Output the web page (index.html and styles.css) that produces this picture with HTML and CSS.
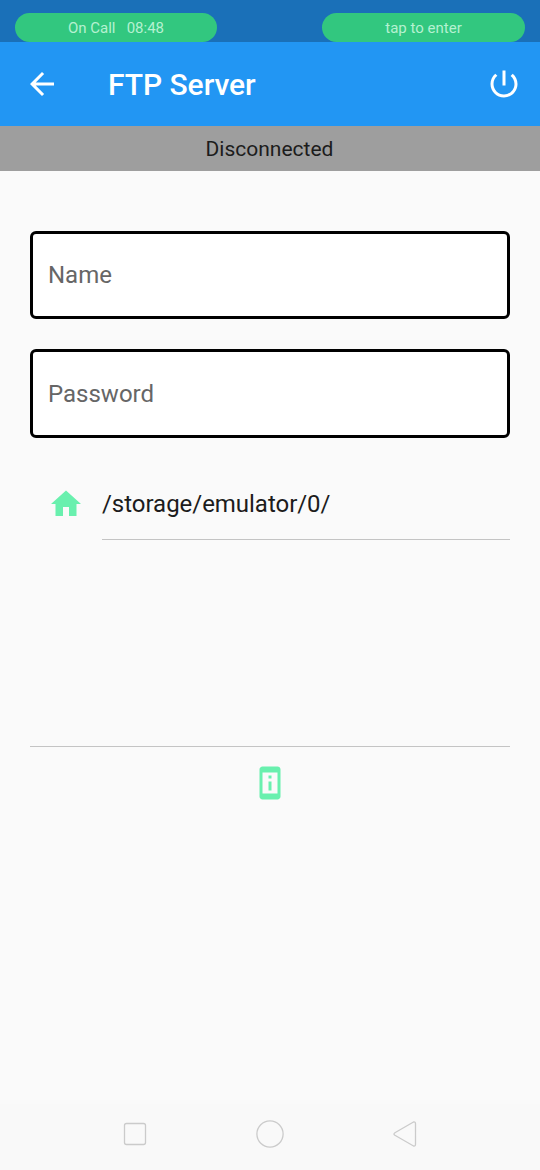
FILE: index.html
```html
<!DOCTYPE html>
<html lang="en">
<head>
<meta charset="utf-8">
<title>FTP Server</title>
<link rel="stylesheet" href="styles.css">
</head>
<body>
<div class="status-bar">
  <div class="pill call">On Call &nbsp; 08:48</div>
  <div class="pill">tap to enter</div>
</div>
<header class="app-bar">
  <svg class="icon back" viewBox="0 0 24 24"><path d="M20 11H7.83l5.59-5.59L12 4l-8 8 8 8 1.41-1.41L7.83 13H20v-2z"/></svg>
  <h1 class="title">FTP Server</h1>
  <svg class="icon power" viewBox="0 0 24 24"><path d="M13 3h-2v10h2V3zm4.83 2.17l-1.42 1.42C17.99 7.86 19 9.81 19 12c0 3.87-3.13 7-7 7s-7-3.13-7-7c0-2.19 1.01-4.14 2.58-5.42L6.17 5.17C4.23 6.82 3 9.26 3 12c0 4.97 4.03 9 9 9s9-4.03 9-9c0-2.74-1.23-5.18-3.17-6.83z"/></svg>
</header>
<div class="connection">Disconnected</div>
<main class="content">
  <div class="field">Name</div>
  <div class="field password">Password</div>
  <div class="path-row">
    <svg class="icon home" viewBox="0 0 24 24"><path d="M10 20v-6h4v6h5v-8h3L12 3 2 12h3v8z"/></svg>
    <div class="path">/storage/emulator/0/</div>
  </div>
  <div class="info">
    <svg class="icon device" viewBox="0 0 24 24"><path d="M13 7h-2v2h2V7zm0 4h-2v6h2v-6zm4-9.99L7 1c-1.1 0-2 .9-2 2v18c0 1.1.9 2 2 2h10c1.1 0 2-.9 2-2V3c0-1.1-.9-1.99-2-1.99zM17 19H7V5h10v14z"/></svg>
  </div>
</main>
<nav class="nav-bar">
  <svg class="nav-icon" viewBox="0 0 30 30"><rect x="4.5" y="4.5" width="21" height="21" rx="2"/></svg>
  <svg class="nav-icon" viewBox="0 0 30 30"><circle cx="15" cy="15" r="13.1"/></svg>
  <svg class="nav-icon" viewBox="0 0 30 30"><path d="M23.5 3 4.9 13.7Q3 15 4.9 16.3L23.500 27Q25.5 27.500 25.5 25.2V4.800Q25.5 2.500 23.5 3Z"/></svg>
</nav>
</body>
</html>
```
FILE: styles.css
```css
* { box-sizing: border-box; }
body {
  margin: 0;
  height: 1170px;
  display: flex;
  flex-direction: column;
  background: #fafafa;
  font-family: Roboto, sans-serif;
  color: #1c1c1c;
  white-space: nowrap;
}
.status-bar {
  height: 42px;
  padding: 13px 15px 0;
  display: flex;
  justify-content: space-between;
  background: #1a70b8;
}
.pill {
  width: 203px;
  height: 29px;
  border-radius: 15px;
  background: #32c77f;
  color: #b5f1d1;
  font-size: 15px;
  line-height: 31px;
  text-align: center;
}
.call { width: 202px; }
.icon { width: 36px; height: 36px; flex: none; display: block; }
.app-bar {
  height: 84px;
  padding: 0 19px 0 24px;
  display: flex;
  align-items: center;
  background: #2296f3;
  color: #fff;
  fill: #fff;
}
.title {
  margin: 2px 0 0 48px;
  font-size: 30px;
  line-height: 36px;
  font-weight: 500;
  letter-spacing: -0.05px;
}
.power { margin: 0 -0.5px 1px auto; }
.connection {
  height: 45px;
  padding-right: 1px;
  background: #9e9e9e;
  text-align: center;
  font-size: 21px;
  line-height: 47px;
}
.content { flex: 1; padding: 60px 30px 0; }
.field {
  height: 88px;
  padding-left: 15px;
  border: 3px solid #000;
  border-radius: 6px;
  background: #fff;
  color: #666;
  font-size: 24px;
  line-height: 82px;
}
.password { height: 89px; margin-top: 30px; line-height: 85px; }
.path-row { display: flex; margin-top: 30px; height: 72px; padding-left: 18px; }
.home, .device { fill: #69f0ae; }
.home { margin-top: 18px; }
.path {
  flex: 1;
  margin-left: 18px;
  border-bottom: 1px solid #c4c4c4;
  font-size: 24px;
  line-height: 72px;
  letter-spacing: -0.03px;
}
.info {
  margin-top: 206px;
  padding: 17.5px 1px 0 0;
  border-top: 1px solid #c4c4c4;
  display: flex;
  justify-content: center;
}
.nav-bar {
  height: 66px;
  padding: 0 120.5px 7px 119.5px;
  display: flex;
  align-items: center;
  justify-content: space-between;
  background: #f9f9f9;
}
.nav-icon { width: 30px; height: 30px; fill: none; stroke: #cbcbcb; stroke-width: 1.3; }
```
